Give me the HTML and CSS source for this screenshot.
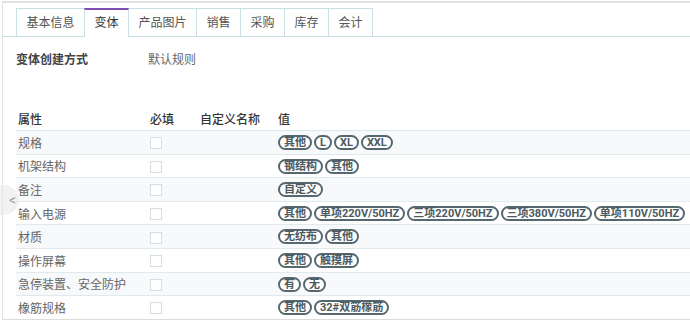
FILE: index.html
```html
<!DOCTYPE html>
<html lang="zh-CN">
<head>
    <meta charset="UTF-8">
    <title>产品变体</title>
    <link rel="stylesheet" href="styles.css">
</head>
<body>
    <div class="sheet">
        <!-- Tabs -->
        <div class="tabs">
            <div class="tab">基本信息</div>
            <div class="tab active">变体</div>
            <div class="tab">产品图片</div>
            <div class="tab">销售</div>
            <div class="tab">采购</div>
            <div class="tab">库存</div>
            <div class="tab">会计</div>
        </div>

        <!-- Variant mode -->
        <div class="field">
            <span class="field-label">变体创建方式</span>
            <span class="field-value">默认规则</span>
        </div>

        <!-- Attribute table -->
        <table class="attrs">
            <thead>
                <tr>
                    <th class="c-name">属性</th>
                    <th class="c-req">必填</th>
                    <th class="c-custom">自定义名称</th>
                    <th>值</th>
                </tr>
            </thead>
            <tbody>
                <tr>
                    <td>规格</td><td><span class="check"></span></td><td></td>
                    <td><span class="tag">其他</span><span class="tag">L</span><span class="tag">XL</span><span class="tag">XXL</span></td>
                </tr>
                <tr>
                    <td>机架结构</td><td><span class="check"></span></td><td></td>
                    <td><span class="tag">钢结构</span><span class="tag">其他</span></td>
                </tr>
                <tr>
                    <td>备注</td><td><span class="check"></span></td><td></td>
                    <td><span class="tag">自定义</span></td>
                </tr>
                <tr>
                    <td>输入电源</td><td><span class="check"></span></td><td></td>
                    <td><span class="tag">其他</span><span class="tag">单项220V/50HZ</span><span class="tag">三项220V/50HZ</span><span class="tag">三项380V/50HZ</span><span class="tag">单项110V/50HZ</span></td>
                </tr>
                <tr>
                    <td>材质</td><td><span class="check"></span></td><td></td>
                    <td><span class="tag">无纺布</span><span class="tag">其他</span></td>
                </tr>
                <tr>
                    <td>操作屏幕</td><td><span class="check"></span></td><td></td>
                    <td><span class="tag">其他</span><span class="tag">触摸屏</span></td>
                </tr>
                <tr>
                    <td>急停装置、安全防护</td><td><span class="check"></span></td><td></td>
                    <td><span class="tag">有</span><span class="tag">无</span></td>
                </tr>
                <tr>
                    <td>橡筋规格</td><td><span class="check"></span></td><td></td>
                    <td><span class="tag">其他</span><span class="tag">32#双筋橡筋</span></td>
                </tr>
            </tbody>
        </table>

        <!-- Side collapse handle -->
        <div class="handle">&lt;</div>
    </div>
</body>
</html>
```

FILE: styles.css
```css
body {
    margin: 0;
    background: #fff;
    font-family: Roboto, "Noto Sans CJK SC", sans-serif;
    font-size: 12px;
    color: #555;
    overflow: hidden;
}

/* Outer sheet frame */
.sheet {
    position: relative;
    margin: 1px 0 0 2px;
    height: 316px;
    border-top: 2px solid #e2e2e2;
    border-left: 1px solid #e2e2e2;
    border-bottom: 1px solid #dcdcdc;
}

/* Tabs */
.tabs {
    display: flex;
    margin-top: 5px;
    padding-left: 13px;
    border-bottom: 1px solid #c8dfe4;
    height: 28px;
}
.tab {
    box-sizing: border-box;
    height: 28px;
    line-height: 28px;
    padding: 0 9.5px;
    border: 1px solid #c8dfe4;
    border-bottom: none;
    margin-right: -1px;
    color: #555;
    font-size: 12px;
    background: #fff;
}
.tab.active {
    border-top: 2px solid #7d4fb3;
    line-height: 27px;
    height: 29px;
    color: #333;
    position: relative;
    z-index: 1;
}

/* Field */
.field {
    display: flex;
    padding: 14px 0 0 13px;
    height: 18px;
    line-height: 18px;
}
.field-label {
    width: 132px;
    font-weight: bold;
    color: #444;
}
.field-value {
    color: #666;
}

/* Table */
.attrs {
    margin: 37px 0 0 13px;
    border-collapse: collapse;
    width: 700px;
}
.attrs th {
    text-align: left;
    font-weight: 500;
    color: #333;
    height: 24px;
    padding: 0 0 0 2px;
    border-bottom: 1px solid #d9e6ea;
}
.attrs td {
    height: 22.6px;
    padding: 0 0 0 2px;
    border-bottom: 1px solid #e0eaed;
    color: #666;
    white-space: nowrap;
}
.attrs tbody tr:nth-child(odd) td {
    background: #f8f9fa;
}
.attrs tbody tr:last-child td {
    border-bottom: none;
}
.c-name { width: 130px; }
.c-req { width: 48px; }
.c-custom { width: 76px; }

.check {
    display: inline-block;
    box-sizing: border-box;
    width: 12px;
    height: 12px;
    border: 1px solid #d6dee1;
    background: #fff;
    vertical-align: middle;
}

.tag {
    display: inline-block;
    box-sizing: border-box;
    height: 15px;
    line-height: 11px;
    padding: 0 4px;
    margin-right: 2px;
    border: 2px solid #56686f;
    border-radius: 8px;
    font-size: 11px;
    font-weight: bold;
    color: #4b5a60;
    background: #fff;
    vertical-align: middle;
}

/* Collapse handle on left edge */
.handle {
    position: absolute;
    left: -16px;
    top: 182px;
    width: 32px;
    height: 30px;
    border-radius: 50%;
    background: rgba(232, 232, 232, 0.6);
    color: #999;
    font-size: 14px;
    line-height: 30px;
    text-align: right;
    padding-right: 3px;
    box-sizing: border-box;
}
```
